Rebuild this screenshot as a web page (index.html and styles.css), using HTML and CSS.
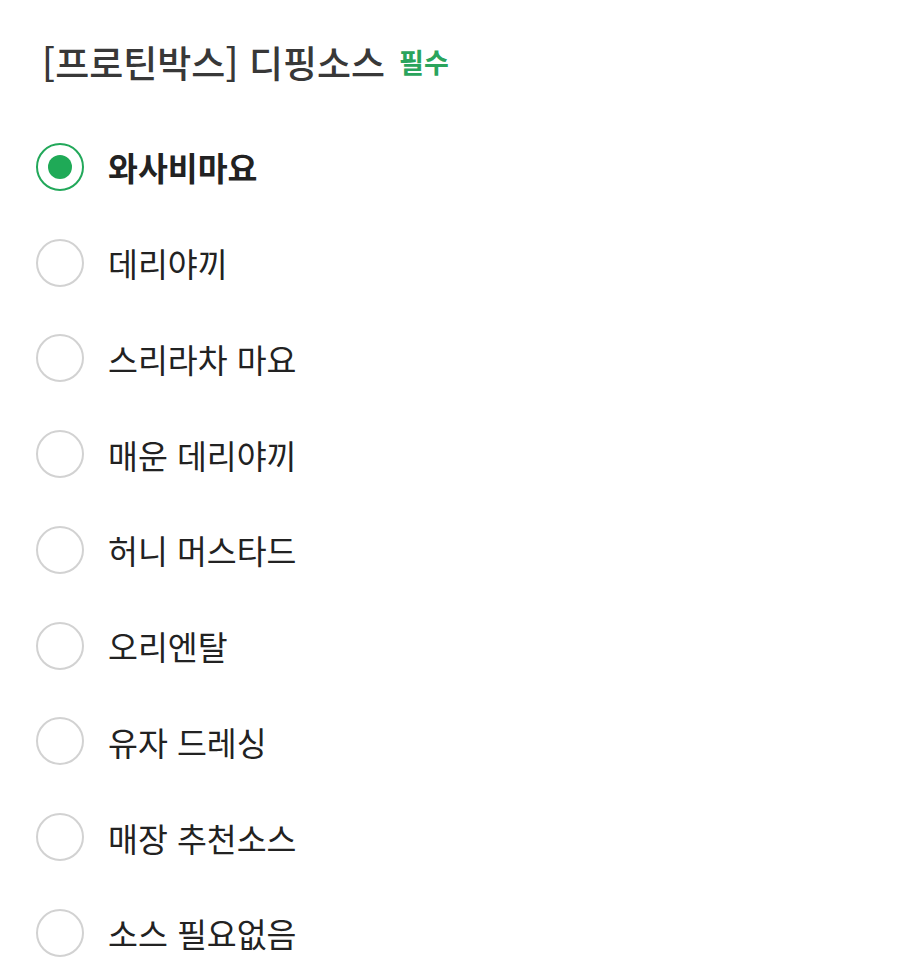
FILE: index.html
```html
<!DOCTYPE html>
<html lang="ko">
<head>
<meta charset="utf-8">
<link rel="stylesheet" href="styles.css">
</head>
<body>
<section class="group">
  <h2 class="title">[프로틴박스] 디핑소스 <span class="req">필수</span></h2>
  <ul class="options">
    <li class="option selected"><span class="radio"></span><span class="label">와사비마요</span></li>
    <li class="option"><span class="radio"></span><span class="label">데리야끼</span></li>
    <li class="option"><span class="radio"></span><span class="label">스리라차 마요</span></li>
    <li class="option"><span class="radio"></span><span class="label">매운 데리야끼</span></li>
    <li class="option"><span class="radio"></span><span class="label">허니 머스타드</span></li>
    <li class="option"><span class="radio"></span><span class="label">오리엔탈</span></li>
    <li class="option"><span class="radio"></span><span class="label">유자 드레싱</span></li>
    <li class="option"><span class="radio"></span><span class="label">매장 추천소스</span></li>
    <li class="option"><span class="radio"></span><span class="label">소스 필요없음</span></li>
  </ul>
</section>
</body>
</html>
```
FILE: styles.css
```css
html, body {
  margin: 0;
  padding: 0;
  background: #ffffff;
}
body {
  font-family: "Noto Sans CJK KR", "Noto Sans", sans-serif;
}
.group {
  padding: 38px 36px 0 36px;
}
.title {
  margin: 0 0 33px 0;
  padding-left: 6px;
  font-size: 37px;
  line-height: 48px;
  font-weight: 500;
  color: #383838;
  display: flex;
  align-items: center;
  gap: 14px;
}
.req {
  font-size: 27px;
  font-weight: 700;
  color: #2aa45c;
}
.options {
  list-style: none;
  margin: 0;
  padding: 0;
}
.option {
  height: 95.75px;
  display: flex;
  align-items: center;
  gap: 24px;
}
.radio {
  width: 48px;
  height: 48px;
  box-sizing: border-box;
  border: 2px solid #d2d2d2;
  border-radius: 50%;
  flex: none;
  display: flex;
  align-items: center;
  justify-content: center;
}
.selected .radio {
  border-color: #22a85a;
}
.selected .radio::after {
  content: "";
  width: 24px;
  height: 24px;
  border-radius: 50%;
  background: #1faa57;
}
.label {
  font-size: 32.5px;
  color: #222222;
  font-weight: 400;
}
.selected .label {
  font-weight: 700;
}
```
